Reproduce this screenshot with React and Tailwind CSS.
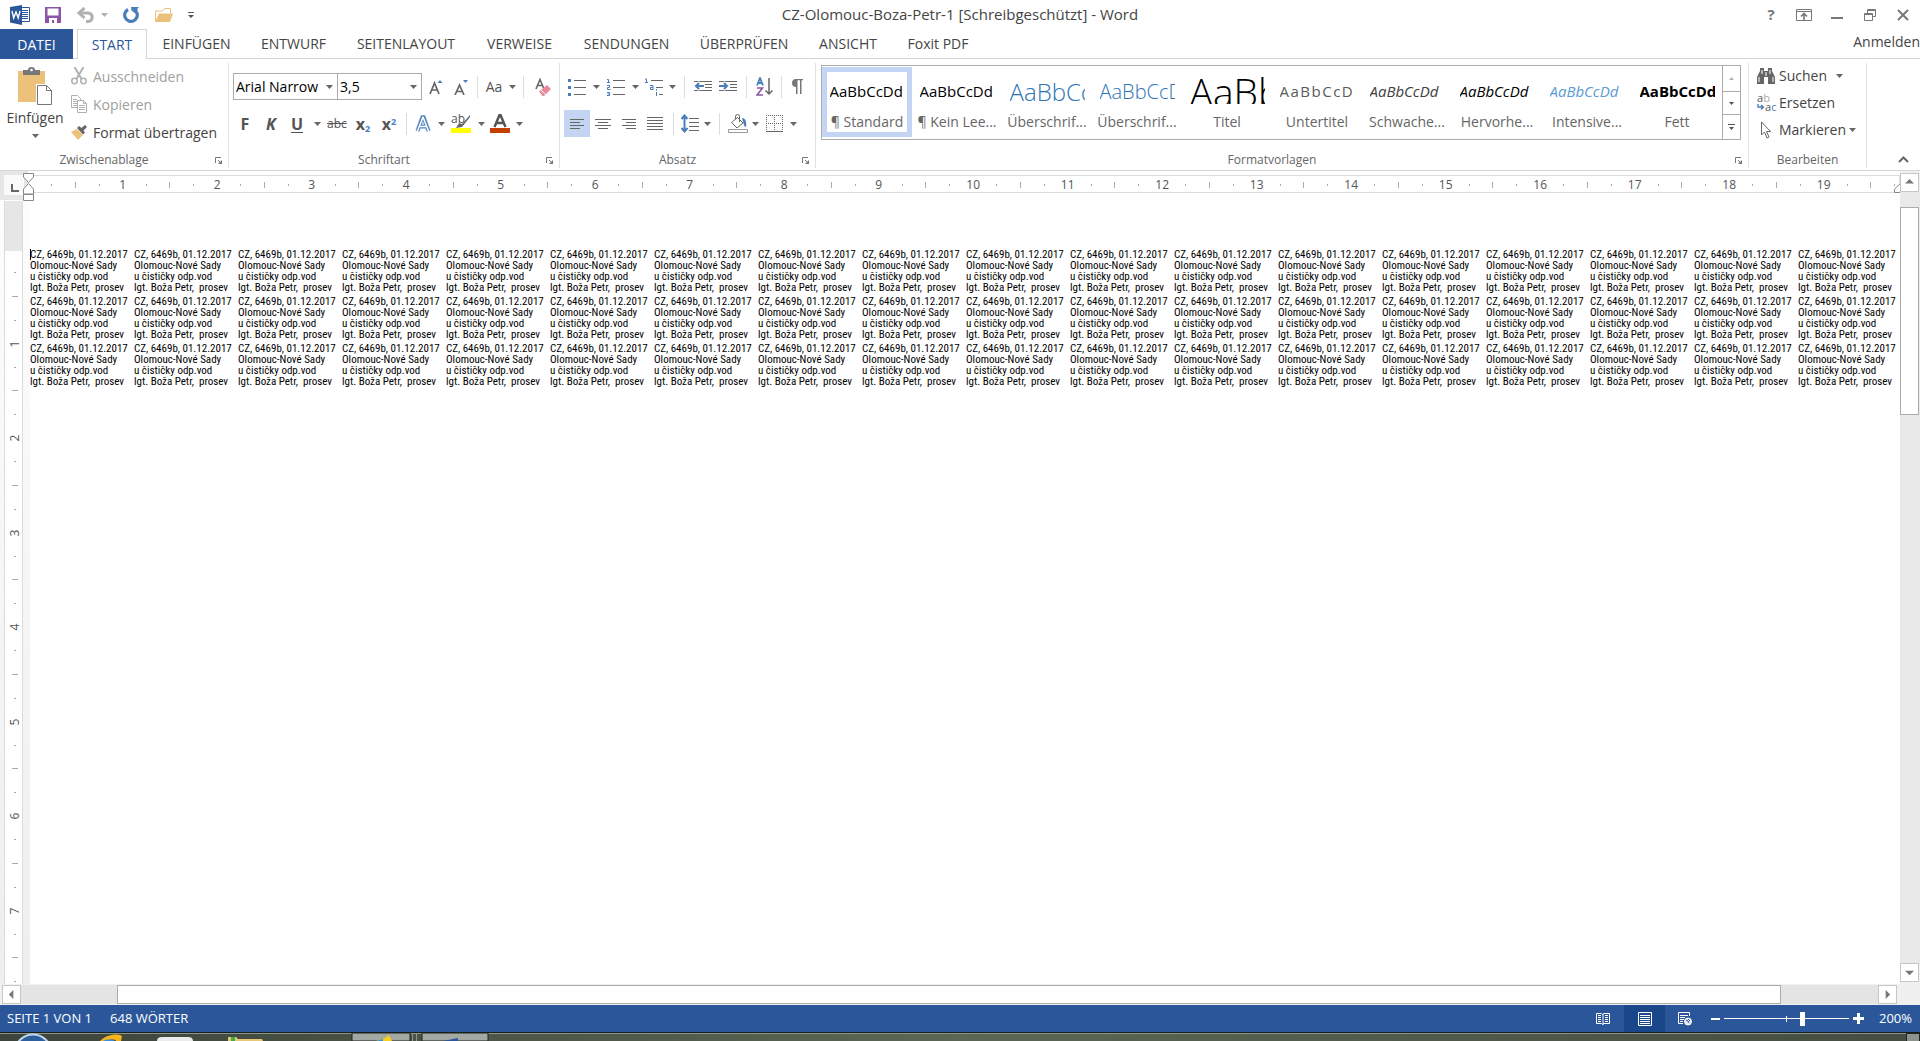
import React, { useState } from 'react';

const tabs = [
  { label: 'EINFÜGEN', width: 'w-[99px]' },
  { label: 'ENTWURF', width: 'w-[95px]' },
  { label: 'SEITENLAYOUT', width: 'w-[130px]' },
  { label: 'VERWEISE', width: 'w-[97px]' },
  { label: 'SENDUNGEN', width: 'w-[117px]' },
  { label: 'ÜBERPRÜFEN', width: 'w-[118px]' },
  { label: 'ANSICHT', width: 'w-[90px]' },
  { label: 'Foxit PDF', width: 'w-[90px]' },
];

const styles = [
  { name: '¶ Standard', sample: 'AaBbCcDd', look: 'text-[15px] text-black' },
  { name: '¶ Kein Lee...', sample: 'AaBbCcDd', look: 'text-[15px] text-black' },
  { name: 'Überschrif...', sample: 'AaBbCc', look: 'text-[24px] font-light text-[#2e74b5]' },
  { name: 'Überschrif...', sample: 'AaBbCcD', look: 'text-[20px] font-light text-[#2e74b5]' },
  { name: 'Titel', sample: 'AaBb', look: 'text-[39px] font-light text-black' },
  { name: 'Untertitel', sample: 'AaBbCcD', look: 'text-[15px] tracking-widest text-[#5a5a5a]' },
  { name: 'Schwache...', sample: 'AaBbCcDd', look: 'text-[15px] italic text-[#404040]' },
  { name: 'Hervorhe...', sample: 'AaBbCcDd', look: 'text-[15px] italic text-black' },
  { name: 'Intensive...', sample: 'AaBbCcDd', look: 'text-[15px] italic text-[#5b9bd5]' },
  { name: 'Fett', sample: 'AaBbCcDd', look: 'text-[15px] font-bold text-black' },
];

const labelLines = [
  'CZ, 6469b, 01.12.2017',
  'Olomouc-Nové Sady',
  'u čističky odp.vod',
  'lgt. Boža Petr,  prosev',
];

// Small building blocks

const Caret = ({ color = '#666666' }) => (
  <svg className="w-[7px] h-1 shrink-0" viewBox="0 0 7 4" fill={color}><path d="M0 0h7L3.5 4z" /></svg>
);

const Drop = ({ width = 'w-[10px]', label }) => (
  <button aria-label={label} className={`h-[27px] shrink-0 flex items-center justify-center ${width}`}>
    <Caret />
  </button>
);

const Tool = ({ label, width = 'w-[26px]', active, children }) => (
  <button
    aria-label={label}
    className={`h-[27px] shrink-0 flex items-center justify-center ${width} ${active ? 'bg-[#c3d5f2]' : ''}`}
  >
    {children}
  </button>
);

const Divider = ({ width = 'w-2' }) => (
  <div className={`h-[22px] shrink-0 flex justify-center ${width}`}>
    <div className="w-px bg-[#dcdcdc]" />
  </div>
);

const Launcher = () => (
  <button aria-label="Optionen" className="w-[7px] h-[7px]">
    <svg className="w-[7px] h-[7px]" viewBox="0 0 7 7" fill="none" stroke="#777777">
      <path d="M.5 6V.5H6M3 3l3 3" />
      <path d="M7 3v4H3z" fill="#777777" stroke="none" />
    </svg>
  </button>
);

const Group = ({ title, width, launcher = true, children }) => (
  <section className={`shrink-0 flex flex-col border-r border-[#e1e1e1] ${width}`}>
    <div className="h-[89px]">{children}</div>
    <div className="h-4 flex items-center text-[12px] text-[#666666]">
      <span className="flex-1 text-center">{title}</span>
      {launcher && <div className="w-5 flex justify-center pl-px"><Launcher /></div>}
    </div>
  </section>
);

const Combo = ({ label, value, width }) => (
  <div className={`relative h-[27px] border border-[#ababab] ${width}`}>
    <select aria-label={label} defaultValue={value} className="w-full h-full appearance-none bg-white pl-[2px] text-[14px] text-black outline-none">
      <option>{value}</option>
    </select>
    <div className="absolute right-1 top-0 h-full flex items-center pointer-events-none"><Caret /></div>
  </div>
);

// Horizontal bars of the alignment icons
const Bars = ({ rows, color = '#666666' }) => (
  <svg className="w-[18px] h-[18px]" viewBox="0 0 18 18" stroke={color} fill="none">
    {rows.map(([x1, x2, y]) => <path key={y} d={`M${x1} ${y}.5H${x2}`} />)}
  </svg>
);

const TitleBar = () => (
  <header className="relative h-[29px] shrink-0 flex items-center justify-between">
    <div className="flex items-center h-[26px] pl-[10px]">
      <svg className="w-5 h-5" viewBox="0 0 20 20">
        <path d="M10.5 2.5h9v14h-9" fill="#fff" stroke="#2b579a" />
        <path d="M12 5.5h6M12 7.5h6M12 9.5h6M12 11.5h6M12 13.5h6" stroke="#2b579a" />
        <path d="M0 2l12-2v20L0 17.5z" fill="#2b579a" />
        <path d="M2 6l1.7 7L6 7l2.2 6L10 6" fill="none" stroke="#fff" strokeWidth="1.4" />
      </svg>
      <button aria-label="Speichern" className="ml-[15px]">
        <svg className="w-4 h-4" viewBox="0 0 16 16"><path d="M0 0h16v16H0z" fill="#8b56a8" /><path d="M2.5 1.5h11v7h-11zM4 11h8v5H9v-3H7v3H4z" fill="#fff" /></svg>
      </button>
      <button aria-label="Rückgängig" className="ml-4">
        <svg className="w-[18px] h-4" viewBox="0 0 18 16" fill="none" stroke="#b1b1b1" strokeWidth="3"><path d="M2 6h9.500a4.300 4.300 0 010 8.500H9" /><path d="M7.500 1L2 6l5.500 5" /></svg>
      </button>
      <button aria-label="Rückgängig-Liste" className="ml-[6px]"><Caret color="#b1b1b1" /></button>
      <button aria-label="Wiederholen" className="ml-[15px]">
        <svg className="w-[17px] h-4" viewBox="0 0 17 16"><path d="M5 2.500A6.300 6.300 0 1013.500 5" fill="none" stroke="#4a7ebb" strokeWidth="3.200" /><path d="M8 0h8l-1.500 1.500V8L8.500 3.500z" fill="#4a7ebb" /></svg>
      </button>
      <button aria-label="Öffnen" className="ml-[15px]">
        <svg className="w-[18px] h-[14px]" viewBox="0 0 18 14"><path d="M.5 13V3h7l2-2.500h6V5" fill="#fff" stroke="#ecc27a" /><path d="M4 5.500h14L15 14H0z" fill="#ecc27a" /></svg>
      </button>
      <button aria-label="Symbolleiste anpassen" className="ml-[15px]">
        <svg className="w-[6px] h-[6px]" viewBox="0 0 6 6" fill="#555"><path d="M0 0h6v1H0zM0 3h6L3 6z" /></svg>
      </button>
    </div>
    <h1 className="absolute inset-x-0 top-0 h-[29px] pointer-events-none flex items-center justify-center text-[15px] text-[#444444]">
      CZ-Olomouc-Boza-Petr-1 [Schreibgeschützt] - Word
    </h1>
    <div className="flex items-center h-[26px] pr-[11px] text-[#777777]">
      <button aria-label="Hilfe" className="w-4 text-[15px] font-bold">?</button>
      <button aria-label="Menüband-Anzeigeoptionen" className="ml-[17px]">
        <svg className="w-4 h-3" viewBox="0 0 16 12" fill="none" stroke="currentColor"><path d="M.5.5h15v11H.5zM.5 2.500h15" /><path d="M8 11V5M5 7.500l3-3 3 3" strokeWidth="1.600" /></svg>
      </button>
      <button aria-label="Minimieren" className="ml-[19px]">
        <svg className="w-3 h-3" viewBox="0 0 12 12" fill="currentColor"><path d="M0 8h12v2H0z" /></svg>
      </button>
      <button aria-label="Verkleinern" className="ml-[21px]">
        <svg className="w-3 h-3" viewBox="0 0 12 12" fill="none" stroke="currentColor"><path d="M.5 4.500h8v7h-8zM.5 5.500h8M3.500 4V.5h8v7H9M3.500 1.500h8" /></svg>
      </button>
      <button aria-label="Schließen" className="ml-[21px]">
        <svg className="w-3 h-3" viewBox="0 0 12 12" fill="none" stroke="currentColor" strokeWidth="2"><path d="M1 1l10 10M11 1L1 11" /></svg>
      </button>
    </div>
  </header>
);

const TabBar = () => (
  <nav className="h-[30px] shrink-0 flex text-[14px] text-[#444444]">
    <button className="w-[73px] bg-[#2b579a] text-white">DATEI</button>
    <div className="w-1 border-b border-[#d5d5d5]" />
    <button className="w-[70px] border border-b-0 border-[#d5d5d5] text-[#2b579a]">START</button>
    <div className="flex-1 flex border-b border-[#d5d5d5]">
      {tabs.map(tab => (
        <button key={tab.label} className={`shrink-0 whitespace-nowrap ${tab.width}`}>{tab.label}</button>
      ))}
      <button className="ml-auto pb-1">Anmelden</button>
    </div>
  </nav>
);

const ClipboardGroup = () => (
  <Group title="Zwischenablage" width="w-[229px]">
    <div className="flex">
      <button className="w-[70px] pt-1 flex flex-col items-center text-[14px] leading-5 text-[#444444]">
        <svg className="w-[34px] h-[38px]" viewBox="0 0 34 38">
          <path d="M0 4h27v31H0z" fill="#ecc27a" />
          <path d="M5 3h5a3.500 3 0 017 0h5v5H5z" fill="#777" />
          <circle cx="13.500" cy="3" r="1.300" fill="#fff" />
          <path d="M18 17h11l5 5v16H18z" fill="#fff" />
          <path d="M19.500 18.500h9l5 5v14h-14zM28.500 18.500v5h5" fill="#fff" stroke="#777" />
        </svg>
        <span className="mt-[3px] mb-[6px]">Einfügen</span>
        <Caret />
      </button>
      <div className="-mt-px pl-px flex flex-col text-[14px] text-[#444444]">
        <button className="h-7 flex items-center gap-[6px] text-[#a0a0a0]">
          <svg className="w-4 h-[18px]" viewBox="0 0 16 18" fill="none" stroke="#b1b1b1" strokeWidth="1.500"><path d="M3.500 0l7 12M12.500 0l-7 12" strokeWidth="2" /><circle cx="3.500" cy="14" r="2.700" /><circle cx="12.500" cy="14" r="2.700" /></svg>
          Ausschneiden
        </button>
        <button className="h-7 flex items-center gap-[6px] text-[#a0a0a0]">
          <svg className="w-4 h-[18px]" viewBox="0 0 16 18" fill="#fff" stroke="#b1b1b1"><path d="M.5.5h6l3 3v9h-9zM2 4.500h4M2 6.500h5M2 8.500h5M2 10.500h5" /><path d="M6.500 5.500h6l3 3v9h-9zM12.500 5.500v3h3M8 10.500h6M8 12.500h6M8 14.500h6" /></svg>
          Kopieren
        </button>
        <button className="h-7 flex items-center gap-[6px]">
          <svg className="w-4 h-[15px]" viewBox="0 0 16 15"><path d="M0 7l6-3 6 6-5 5z" fill="#ecc27a" /><path d="M6 3l2-2 2.500 2L14 0l2 2-3.500 3.500 1.500 2-2 2z" fill="#666" /></svg>
          Format übertragen
        </button>
      </div>
    </div>
  </Group>
);

const FontGroup = () => (
  <Group title="Schriftart" width="w-[331px]">
    <div className="pl-1 pt-[10px] flex items-center">
      <Combo label="Schriftart" value="Arial Narrow" width="w-[105px]" />
      <Combo label="Schriftgrad" value="3,5" width="w-[84px] border-l-0" />
      <Tool label="Schriftart vergrößern" width="w-[27px]">
        <svg className="w-4 h-4" viewBox="0 0 16 16"><path d="M2 15L6.500 4 11 15M3.500 11h6" fill="none" stroke="#666" strokeWidth="1.700" /><path d="M9.500 4h5L12 1z" fill="#4a7ebb" /></svg>
      </Tool>
      <Tool label="Schriftart verkleinern" width="w-[24px]">
        <svg className="w-4 h-4" viewBox="0 0 16 16"><path d="M2 16L6.500 6 11 16M3.500 12.500h6" fill="none" stroke="#666" strokeWidth="1.700" /><path d="M10 1h5l-2.500 3z" fill="#4a7ebb" /></svg>
      </Tool>
      <Divider />
      <Tool label="Groß-/Kleinschreibung"><span className="text-[14px] text-[#555]">Aa</span></Tool>
      <Drop label="Schreibung wählen" />
      <Divider width="w-3" />
      <Tool label="Formatierung löschen" width="w-[28px]">
        <svg className="w-4 h-[18px]" viewBox="0 0 16 18"><path d="M1 11L5 1.500 9 11M2.500 7.500h5" fill="none" stroke="#666" strokeWidth="1.600" /><path d="M4 13.500L12 7l4 4-7 7H7.500z" fill="#e8899b" /><path d="M6 12l4.500 4.500" stroke="#fff" /></svg>
      </Tool>
    </div>
    <div className="pl-[3px] pt-[10px] flex items-center text-[#555555]">
      <Tool label="Fett"><b className="text-[16px]">F</b></Tool>
      <Tool label="Kursiv"><b className="text-[16px] italic">K</b></Tool>
      <Tool label="Unterstrichen"><b className="text-[16px] underline underline-offset-2">U</b></Tool>
      <Drop width="w-[14px]" label="Unterstreichungsart" />
      <Tool label="Durchgestrichen"><span className="text-[12px] line-through">abc</span></Tool>
      <Tool label="Tiefgestellt"><b className="text-[16px]">x<sub className="text-[9px] text-[#4a7ebb]">2</sub></b></Tool>
      <Tool label="Hochgestellt"><b className="text-[16px]">x<sup className="text-[9px] text-[#4a7ebb]">2</sup></b></Tool>
      <Divider />
      <Tool label="Texteffekte">
        <svg className="w-4 h-[18px]" viewBox="0 0 16 18" fill="none" strokeLinejoin="round"><path d="M2.500 16L7.500 2h1l5 14M4.500 11.500h7" stroke="#bcd2f0" strokeWidth="5" /><path d="M2.500 16L7.500 2h1l5 14M4.500 11.500h7" stroke="#4a7ebb" strokeWidth="3.500" /><path d="M2.500 16L8 2l5.500 14M4.500 11.500h7" stroke="#fff" strokeWidth="1.500" /></svg>
      </Tool>
      <Drop label="Effekt wählen" />
      <Tool label="Texthervorhebungsfarbe" width="w-[30px]">
        <svg className="w-5 h-[19px]" viewBox="0 0 20 19"><text x="0" y="9" fontSize="12" fill="#555">ab</text><path d="M19 1l-8 9-3-1-3 5 6-1 8-10z" fill="#666" /><path d="M0 14h20v5H0z" fill="#ff0" /></svg>
      </Tool>
      <Drop label="Hervorhebung wählen" />
      <Tool label="Schriftfarbe" width="w-[28px]">
        <svg className="w-5 h-[19px]" viewBox="0 0 20 19"><path d="M4.500 13L9.500 1h1l5 12M6.500 9h7" fill="none" stroke="#555" strokeWidth="2.500" /><path d="M0 14h20v5H0z" fill="#c43e00" /></svg>
      </Tool>
      <Drop label="Farbe wählen" />
    </div>
  </Group>
);

const ParagraphGroup = () => (
  <Group title="Absatz" width="w-[256px]">
    <div className="pl-1 pt-[10px] flex items-center">
      <Tool label="Aufzählungszeichen">
        <svg className="w-[18px] h-[18px]" viewBox="0 0 18 18"><path d="M6 2.500h12M6 9.500h12M6 16.500h12" stroke="#666" /><path d="M0 1h3v3H0zM0 8h3v3H0zM0 15h3v3H0z" fill="#4a7ebb" /></svg>
      </Tool>
      <Drop width="w-3" label="Aufzählung wählen" />
      <Tool label="Nummerierung" width="w-[28px]">
        <svg className="w-[18px] h-[18px]" viewBox="0 0 18 18"><path d="M6 2.500h12M6 9.500h12M6 16.500h12" stroke="#666" /><path d="M0 1.500h1.500V5M0 4.500h3M0 7.500h2.500v2H.5v2h3M0 14.500h2.500v3H0M.5 16h2" fill="none" stroke="#4a7ebb" /></svg>
      </Tool>
      <Drop label="Nummerierung wählen" />
      <Tool label="Liste mit mehreren Ebenen" width="w-[28px]">
        <svg className="w-[18px] h-[18px]" viewBox="0 0 18 18"><path d="M6 2.500h12M11 9.500h7M14 16.500h4" stroke="#666" /><path d="M0 1h1.500v4M0 4.500h3M5 7.500h3V12M8 9.500H5.500v2H8M11.500 11v1.500M11.500 14v4" fill="none" stroke="#4a7ebb" /></svg>
      </Tool>
      <Drop width="w-2" label="Ebene wählen" />
      <Divider width="w-4" />
      <Tool label="Einzug verkleinern" width="w-[22px]">
        <svg className="w-[18px] h-3" viewBox="0 0 18 12"><path d="M0 .5h18M11 3.500h7M11 6.500h7M0 9.500h18" stroke="#666" /><path d="M10 5H3M6 1.500L2 5l4 3.500" stroke="#fff" strokeWidth="4" fill="none" /><path d="M10 5H2M5 2L2 5l3 3" stroke="#4a7ebb" strokeWidth="2" fill="none" /></svg>
      </Tool>
      <Tool label="Einzug vergrößern" width="w-[28px]">
        <svg className="w-[18px] h-3" viewBox="0 0 18 12"><path d="M0 .5h18M11 3.500h7M11 6.500h7M0 9.500h18" stroke="#666" /><path d="M0 5h7M4 1.500L8 5 4 8.500" stroke="#fff" strokeWidth="4" fill="none" /><path d="M0 5h8M5 2l3 3-3 3" stroke="#4a7ebb" strokeWidth="2" fill="none" /></svg>
      </Tool>
      <Divider />
      <Tool label="Sortieren" width="w-[28px]">
        <svg className="w-[17px] h-[19px]" viewBox="0 0 17 19" fill="none"><path d="M1 8.500L4 1l3 7.500M2 6h4" stroke="#4a7ebb" strokeWidth="1.800" /><path d="M1 11h5.500l-5.500 7h6" stroke="#8b56a8" strokeWidth="1.600" /><path d="M13 1v16M9.500 13.500L13 17l3.500-3.500" stroke="#666" strokeWidth="1.500" /></svg>
      </Tool>
      <Divider width="w-[6px]" />
      <Tool label="Absatzmarken anzeigen">
        <svg className="w-3 h-[15px]" viewBox="0 0 12 15"><path d="M5 8a4 4 0 010-8h7v1.200h-1.500V15H9V1.200H6.500V15H5z" fill="#777" /></svg>
      </Tool>
    </div>
    <div className="pl-1 pt-[10px] flex items-center">
      <Tool label="Linksbündig" active><Bars rows={[[2, 16, 4], [2, 12, 7], [2, 16, 10], [2, 12, 13]]} /></Tool>
      <Tool label="Zentriert"><Bars rows={[[1, 17, 4], [4, 14, 7], [1, 17, 10], [4, 14, 13]]} /></Tool>
      <Tool label="Rechtsbündig"><Bars rows={[[2, 16, 4], [6, 16, 7], [2, 16, 10], [6, 16, 13]]} /></Tool>
      <Tool label="Blocksatz"><Bars rows={[[1, 17, 2], [1, 17, 5], [1, 17, 8], [1, 17, 11], [1, 17, 14]]} /></Tool>
      <Divider width="w-[10px]" />
      <Tool label="Zeilenabstand" width="w-[24px]">
        <svg className="w-[18px] h-[19px]" viewBox="0 0 18 19" fill="none"><path d="M8 4.500h10M8 8.500h10M8 12.500h10M8 16.500h10" stroke="#666" /><path d="M3.500 2v15M.5 5l3-3.500 3 3.500M.5 14l3 3.500 3-3.500" stroke="#4a7ebb" strokeWidth="2" /></svg>
      </Tool>
      <Drop label="Abstand wählen" />
      <Divider width="w-[14px]" />
      <Tool label="Schattierung" width="w-[24px]">
        <svg className="w-5 h-[19px]" viewBox="0 0 20 19" fill="none"><path d="M3.500 8.500l6-5 5.500 5.500-6 5z" stroke="#666" fill="#fff" /><path d="M7.500 5V2.500a2 2 0 014 0V8" stroke="#666" /><path d="M14 4c3 0 5 3 4 9-2 0-2-3-3-5z" fill="#4a7ebb" /><path d="M.5 15.500h19v3H.5z" stroke="#999" fill="#fff" /></svg>
      </Tool>
      <Drop label="Schattierung wählen" />
      <Tool label="Rahmen" width="w-[28px]">
        <svg className="w-[17px] h-[17px]" viewBox="0 0 17 17" fill="none" stroke="#666"><path d="M0 .5h17M0 8.500h17M.5 0v16M8.500 0v16M16.500 0v16" strokeDasharray="1 1" /><path d="M0 16.500h17" /></svg>
      </Tool>
      <Drop label="Rahmen wählen" />
    </div>
  </Group>
);

const StylesGroup = () => {
  const [selected, setSelected] = useState(0);
  return (
    <Group title="Formatvorlagen" width="w-[933px]">
      <div className="ml-[5px] mt-[2px] h-[75px] w-[920px] flex border border-[#ababab]">
        <div className="flex-1 flex pt-px">
          {styles.map((s, i) => (
            <button
              key={i}
              onClick={() => setSelected(i)}
              className={`w-[90px] h-[70px] shrink-0 border-[5px] flex flex-col items-center ${i === selected ? 'border-[#c3d5f2]' : 'border-transparent'}`}
            >
              <span className={`mt-[2px] w-[75px] h-[30px] overflow-hidden flex items-end text-left leading-[25px] whitespace-nowrap ${s.look}`}>
                {s.sample}
              </span>
              <span className="mt-2 text-[14px] leading-5 text-[#666666] whitespace-nowrap">{s.name}</span>
            </button>
          ))}
        </div>
        <div className="w-[18px] flex flex-col border-l border-[#ababab] divide-y divide-[#ababab]">
          <button aria-label="Nach oben" className="h-[26px] flex items-center justify-center">
            <svg className="w-[5px] h-[3px]" viewBox="0 0 5 3" fill="#b1b1b1"><path d="M0 3h5L2.500 0z" /></svg>
          </button>
          <button aria-label="Nach unten" className="h-[23px] flex items-center justify-center">
            <svg className="w-[5px] h-[3px]" viewBox="0 0 5 3" fill="#555"><path d="M0 0h5L2.500 3z" /></svg>
          </button>
          <button aria-label="Weitere" className="flex-1 flex items-center justify-center">
            <svg className="w-[7px] h-[6px]" viewBox="0 0 7 6" fill="#555"><path d="M0 0h7v1H0zM1 3h5L3.500 6z" /></svg>
          </button>
        </div>
      </div>
    </Group>
  );
};

const EditGroup = () => (
  <Group title="Bearbeiten" width="w-[118px]" launcher={false}>
    <div className="-mt-px pl-2 flex flex-col text-[14px] text-[#444444]">
      <button className="h-[27px] flex items-center">
        <svg className="w-[18px] h-4 mr-1" viewBox="0 0 18 16" fill="#666"><path d="M3 0h4v3h4V0h4v3l3 6v7h-7v-7H7v7H0V9l3-6z" /><path d="M2 9v5M16 9v5M5 2v4M13 2v4M9 4v4" stroke="#fff" /></svg>
        Suchen<span className="ml-[9px]"><Caret /></span>
      </button>
      <button className="h-[27px] flex items-center">
        <svg className="w-5 h-[18px] mr-[2px]" viewBox="0 0 20 18"><text x="0" y="8" fontSize="11" fill="#555">a<tspan fill="#aaa">b</tspan></text><text x="8" y="17" fontSize="11" fill="#555">a<tspan fill="#4a7ebb">c</tspan></text><path d="M1 10v3h5M4 11l2.500 2L4 15.500" fill="none" stroke="#4a7ebb" strokeWidth="1.400" /></svg>
        Ersetzen
      </button>
      <button className="h-[27px] flex items-center">
        <svg className="w-[18px] h-[18px] mr-1" viewBox="0 0 18 18" fill="#fff" stroke="#666"><path d="M4.500 1v13l3-3 2.500 6 2-1-2.500-5.500h4z" /></svg>
        Markieren<span className="ml-[3px]"><Caret /></span>
      </button>
    </div>
  </Group>
);

const Ribbon = () => (
  <div className="h-[112px] shrink-0 flex border-b border-[#d5d5d5] pt-1 pb-[2px]">
    <ClipboardGroup />
    <FontGroup />
    <ParagraphGroup />
    <StylesGroup />
    <EditGroup />
    <button aria-label="Menüband reduzieren" className="ml-auto mr-[11px] self-end mb-[5px]">
      <svg className="w-[11px] h-[7px]" viewBox="0 0 11 7" fill="none" stroke="#666" strokeWidth="2"><path d="M1 6l4.500-4.500L10 6" /></svg>
    </button>
  </div>
);

// One mark per quarter centimetre, the number on every fourth
const Mark = ({ index, vertical }) => {
  const step = (index + 1) % 4;
  if (step === 0) {
    return <span className={vertical ? '-rotate-90' : ''}>{(index + 1) / 4}</span>;
  }
  if (step === 2) return <i className={`bg-[#ababab] ${vertical ? 'w-[6px] h-px' : 'w-px h-[6px]'}`} />;
  return <i className={`bg-[#ababab] ${vertical ? 'w-[2px] h-px' : 'w-px h-[2px]'}`} />;
};

const HorizontalRuler = () => (
  <div className="relative h-[29px] shrink-0 flex">
    <div className="w-7 bg-[#e6e6e6] pl-1 pt-1">
      <button aria-label="Tabstopp" className="w-5 h-5 flex items-end justify-center pb-[3px] pl-px bg-[#fafafa]">
        <svg className="w-2 h-2" viewBox="0 0 8 8" fill="none" stroke="#666" strokeWidth="2"><path d="M1 0v7h7" /></svg>
      </button>
    </div>
    <div className="flex-1 min-w-0 mt-1 h-[18px] overflow-hidden border-y border-r border-[#dcdcdc] pl-3">
      <div className="w-[1890px] h-full pt-px grid grid-cols-[repeat(80,minmax(0,1fr))] text-[12px] leading-4 text-[#555555]">
        {Array.from({ length: 79 }, (_, i) => (
          <div key={i} className="flex items-center justify-center"><Mark index={i} /></div>
        ))}
      </div>
    </div>
    {/* indent markers lie over the ruler */}
    <svg className="absolute left-[23px] top-[2px] w-[11px] h-7" viewBox="0 0 11 28" fill="#fff" stroke="#888"><path d="M.5.5h10V4l-5 5.500L.5 4zM.5 21v-5l5-5.500 5 5.500v5zM.5 21.500h10v6H.5z" /></svg>
    <svg className="absolute right-0 top-3 w-[6px] h-[10px]" viewBox="0 0 6 10" fill="#fff" stroke="#888"><path d="M6 1L.5 6v3.500H6" /></svg>
  </div>
);

const VerticalRuler = () => (
  <div className="w-[30px] shrink-0 pl-1 pt-px bg-gradient-to-b from-[#fdfdfd] to-[#eeeeee]">
    <div className="w-[19px] h-full flex flex-col overflow-hidden border-x border-[#dcdcdc] bg-white">
      <div className="h-[50px] shrink-0 bg-[#e6e6e6]" />
      <div className="mt-[10px] pl-[3px] h-[756px] shrink-0 grid grid-rows-[repeat(32,minmax(0,1fr))] text-[12px] leading-4 text-[#555555]">
        {Array.from({ length: 31 }, (_, i) => (
          <div key={i} className="flex items-center justify-center"><Mark index={i} vertical /></div>
        ))}
      </div>
    </div>
  </div>
);

const Page = () => (
  <main className="flex-1 min-w-0 overflow-hidden bg-white pt-[49px]">
    <div className="grid grid-cols-[repeat(18,104px)] gap-y-[3px] font-['Liberation_Sans_Narrow','Arial_Narrow','Roboto_Condensed','Liberation_Sans',sans-serif] text-[11px] leading-[11px] text-black">
      {Array.from({ length: 54 }, (_, i) => (
        <div key={i} className="relative whitespace-pre">
          {i === 0 && <span className="absolute left-0 top-0 w-px h-[11px] bg-black" />}
          {labelLines.map(line => <p key={line}>{line}</p>)}
        </div>
      ))}
    </div>
  </main>
);

const arrows = {
  up: 'M0 6h10L5 1z',
  down: 'M0 3h10L5 8z',
  left: 'M7 0v10L2 5z',
  right: 'M3 0v10l5-5z',
};

const ScrollButton = ({ dir, label }) => (
  <button aria-label={label} className="w-[19px] h-[19px] shrink-0 flex items-center justify-center border border-[#c6c6c6] bg-white">
    <svg className="w-[9px] h-[9px]" viewBox="0 0 10 10" fill="#777"><path d={arrows[dir]} /></svg>
  </button>
);

const VerticalScroll = () => (
  <div className="w-5 shrink-0 flex flex-col bg-[#f0f0f0] pt-[2px] pb-[2px]">
    <ScrollButton dir="up" label="Nach oben blättern" />
    <div className="flex-1 pt-[15px] pr-px bg-[#e9e9e9]">
      <div className="h-[208px] border border-[#ababab] bg-white" />
    </div>
    <ScrollButton dir="down" label="Nach unten blättern" />
  </div>
);

const HorizontalScroll = () => (
  <div className="h-[21px] shrink-0 flex items-center bg-[#f0f0f0] pl-[2px] pr-[23px]">
    <ScrollButton dir="left" label="Nach links blättern" />
    <div className="flex-1 h-[19px] pl-24 pr-[97px] bg-[#e4e4e4]">
      <div className="h-full border border-[#ababab] bg-white" />
    </div>
    <ScrollButton dir="right" label="Nach rechts blättern" />
  </div>
);

const StatusBar = () => (
  <footer className="h-[27px] shrink-0 flex items-center bg-[#2b579a] pl-[7px] pr-2 text-[13px] text-white">
    <span>SEITE 1 VON 1</span>
    <span className="ml-[18px]">648 WÖRTER</span>
    <button aria-label="Lesemodus" className="ml-auto w-[42px] h-full flex items-center justify-center">
      <svg className="w-[14px] h-[14px]" viewBox="0 0 14 14" fill="none" stroke="#fff"><path d="M6.500 2.500l-1-1h-5v10h5l1 1 1-1h6v-10h-6zM7 2v11M2 3.500h3M2 5.500h3M2 7.500h3M2 9.500h3M9 3.500h3M9 5.500h3M9 7.500h3M9 9.500h3" /></svg>
    </button>
    <button aria-label="Seitenlayout" className="w-[41px] h-full flex items-center justify-center bg-[#19478a]">
      <svg className="w-[14px] h-[14px]" viewBox="0 0 14 14" fill="none" stroke="#fff"><path d="M.5.5h13v13H.5zM2 3.500h10M2 5.500h10M2 7.500h10M2 9.500h10M2 11.500h10" /></svg>
    </button>
    <button aria-label="Weblayout" className="w-[40px] h-full flex items-center justify-center">
      <svg className="w-[14px] h-[14px]" viewBox="0 0 14 14" fill="none" stroke="#fff"><path d="M5 11.500H.5V.5h11V4M2 3.500h8M2 5.500h5M2 7.500h4M2 9.500h3" /><circle cx="10" cy="9.500" r="3.500" fill="#dfe8f5" /><path d="M8 8l2 1 1 2M10 7l2 2" stroke="#2b579a" /></svg>
    </button>
    <button aria-label="Verkleinern" className="ml-[6px] w-[9px] h-4 flex items-center"><span className="w-full h-[2px] bg-white" /></button>
    <div className="relative ml-1 w-[125px] h-4 flex items-center">
      <input
        type="range"
        aria-label="Zoom"
        min="0"
        max="100"
        defaultValue="63"
        className="w-full h-px appearance-none bg-white [&::-webkit-slider-thumb]:appearance-none [&::-webkit-slider-thumb]:w-[5px] [&::-webkit-slider-thumb]:h-[14px] [&::-webkit-slider-thumb]:bg-white"
      />
      <span className="absolute left-[62px] top-[5px] w-px h-[6px] bg-white" />
    </div>
    <button aria-label="Vergrößern" className="ml-1 w-[11px] h-[11px]">
      <svg className="w-[11px] h-[11px]" viewBox="0 0 11 11" fill="#fff"><path d="M4 0h3v4h4v3H7v4H4V7H0V4h4z" /></svg>
    </button>
    <span className="w-12 text-right">200%</span>
  </footer>
);

// Top edge of the desktop taskbar below the window
const Taskbar = () => (
  <div className="h-[9px] shrink-0 flex justify-between overflow-hidden border-t border-[#15201c] bg-gradient-to-r from-[#3d443b] via-[#5b6653] to-[#454d42]">
    <svg className="w-[500px] h-2 shrink-0" viewBox="0 0 500 8">
      <path d="M0 .5h500" stroke="#8b968d" />
      <circle cx="33" cy="20" r="18.500" fill="#2d5f9e" stroke="#c3d6ea" strokeWidth="2" />
      <path d="M100 8c6-6 16-8 22-5l-1 5h-5c0-2-6-2-10 0z" fill="#f3b51b" />
      <path d="M103 8c3-2 9-2 12 0z" fill="#3b8ede" />
      <path d="M157 8q0-4 5-4h26q5 0 5 4z" fill="#ececec" />
      <path d="M228 8V4h8l2 2h24l1 2z" fill="#e8c877" /><path d="M231 4h4v4h-4z" fill="#3fae49" />
      <path d="M352 0h58v8h-58zM422 0h66v8h-66z" fill="#a3a8a3" stroke="#20261f" />
      <path d="M412.500 0v8M416.500 0v8" stroke="#8b968d" />
      <path d="M376 8l9-3 4-3 3 6z" fill="#f5cf1c" /><path d="M376 8l7-2v2z" fill="#3b8ede" />
      <path d="M443 8l15-3v3z" fill="#2b579a" />
    </svg>
    <div className="flex-1 border-t border-[#8b968d]" />
    <div className="w-[14px] border border-b-0 border-[#20261f] bg-[#8d938d]" />
  </div>
);

const App = () => (
  <div className="h-screen flex flex-col overflow-hidden bg-white font-['Open_Sans','Noto_Sans',sans-serif]">
    <TitleBar />
    <TabBar />
    <Ribbon />
    <div className="flex-1 min-h-0 flex">
      <div className="flex-1 min-w-0 flex flex-col">
        <HorizontalRuler />
        <div className="flex-1 min-h-0 flex">
          <VerticalRuler />
          <Page />
        </div>
      </div>
      <VerticalScroll />
    </div>
    <HorizontalScroll />
    <StatusBar />
    <Taskbar />
  </div>
);

export default App;
